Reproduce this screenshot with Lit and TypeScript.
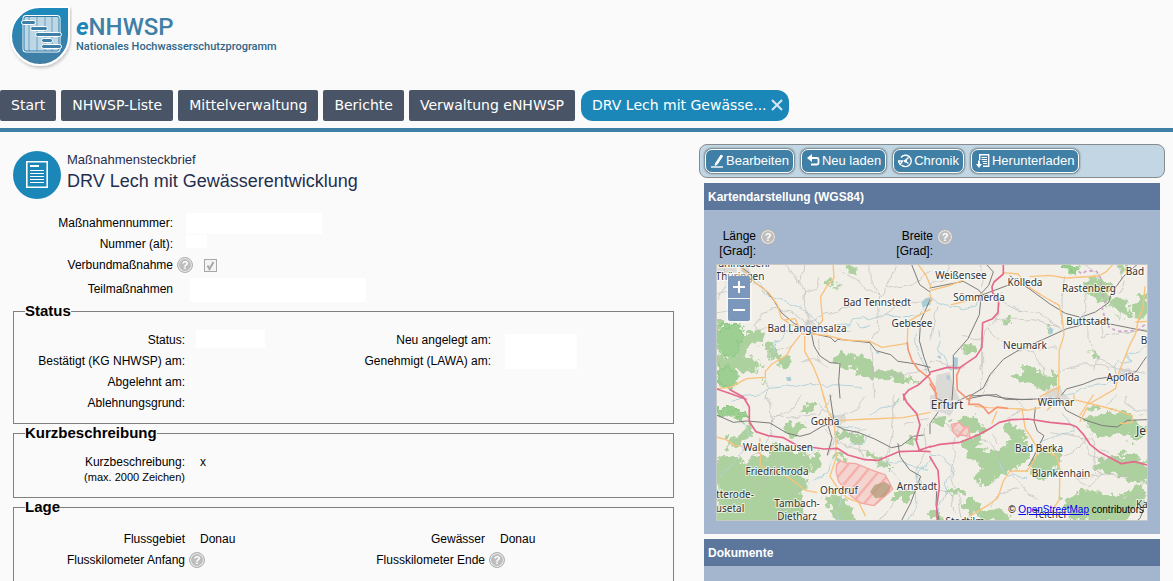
import { LitElement, html, css, svg } from "lit";
import { customElement, property } from "lit/decorators.js";

type Layer = "forest" | "park" | "town" | "river" | "lake" | "minor" | "rail" | "primary" | "trunk" | "motorway" | "border" | "zone";
interface Tile {
  dx: number;
  dy: number;
  layers: Partial<Record<Layer, string>>;
}

const ORDER: Layer[] = ["town", "forest", "park", "river", "lake", "minor", "rail", "primary", "trunk", "motorway", "border", "zone"];

const TILES: Tile[] = [
  {
    dx: 0,
    dy: 0,
    layers: {
      town: "M285 185l18-8 12 14 8 22-22 12-24-8zM92 22l22-4 8 20-20 8zM20 20h60v18h-60z",
      forest:
        "M18 168l8 18 10 8-18 14zM20 205l30-8 20-2 14-5 12 8 6 28 26-10 20-8 14 18 4 14-12 8-24-4-12 8-12 22-22 14-14 8-26-8-14 4zM22 290l40 10 34-16 20 12 30 2 10 20-18 14-14 6-28-8-16 4-6 42-24 10-24-12z M158 255l22-8 14 14-10 10-22-4zM174 276l24-6 14 14-2 16-28-6zM378 292l22-18 20 6 18 10 38 10 14 18 20 14 44 2 30 14 30 2-8 12-40-2-44-6-22 8-12-4-30-14-30-20-26-6-28-4zM412 22l18-8 10 12-6 14-18-2zM346 60l12-6 18 10-10 14-12-6zM200 300l38-8-4 22-16 10-12-12zM92 312l24-6 30 14-10 16-30-4zM590 362l24-4 2 8-20 6zM520 338l30-6 10 12-30 8zM375 82l14-6-4 8zM150 365l10-4 2 10-8 2z",
      park: "M20 205l50-10 26 0 6 34-20 40-14 20-46-2zM28 312l54 30-2 34-20 12-30-14z",
      lake: "M634 126l14-12 14-2v22l-24 8zM228 352l14-2 2 12-12 2zM495 275l14 2-4 6z",
      river:
        "M92 30l20 18 38 26 10 28 50 14 30 16 30 10 40 36 24 24 60-6 28-2 8-20 30-4 18 10 36-12 40-2 30 4 40-2 20-26 12-14M60 418l40-12 50-4 30-16 40-6 36 4 44-14 50 6 20-8 60 4 30 14M622 222l-4 50 18 30 20 36M235 200l-40 50-10 40M440 190l12 14 28-8",
      minor:
        "M330 55l-8 30-38 10-14-34M284 95l-4 40 20 50M136 196l22-36 34-12 52 8 54 34M136 196l14 10 110 8M300 190l40-20 40-20 42-8M480 14v34l22 62 4 90-22 42 6 84v90M386 30l50 26 74 58 18-28 72-12M20 104l40-8 66-22M165 352l14 34-8 34M326 238l4 60 22 30M276 306l54-10M490 332l80 12 90-14M420 205l-100 10M505 180l60-40 95-20M40 14l10 60-26 44M230 14l20 40 24 10M560 14l-30 70M20 160l40-10M240 262l-60 20M600 75l60-40M282 14l-8 44",
      rail:
        "M94 22l30 22 8 22 30 20 30 36 20 34 40 34 52 28 8 40 18 30 30 20 30 2-4 54 4 50M305 220l56 12 14 14 8-8 22 2 75 8 18 24 44 12 22 20 56 8 40 10M605 14l24 60 31 22M660 120l-28 62-4 60 14 50 18 50",
      primary:
        "M92 22l44 46 40 30 26 36 12 40 28 20 24 6 10 22h32l30-42-4-40-2-30 20-34 20-22-4-62M304 222l46 4 54 14 76 4 36 18 76-12 2-66 66-36M270 226l-26 34-14 26-44 26-20 22v18l-56 4-50 26-40 4M284 230v44l26 46 20 50 14 50M625 14l24 34 14 34M225 180l30-4 14 28",
      trunk: "M592 248l2 20 12 34 18 26 28 22M652 350l8 6",
      motorway: "M18 386l40 14 50 18M582 420v-14l14-16 30-16 26-24 8-8",
    },
  },
  {
    dx: 660,
    dy: 0,
    layers: {
      town: "M20 345l40-10 10 40 20 45H10zM350 390l40-12 8 20-20 22h-40zM565 330l34-6 8 20-34 6z",
      forest:
        "M390 14h46l6 16-18 12zM470 62l20-14 26 10 22 20 2 34-14 22-20-16-16-14-22-6zM545 118l34 4 24 18-4 22-18 10-18-20-22-14zM612 130l20-20 18-10v60l-20 18-18-8zM102 262l18-12 20 4 4 12-16 14-22 2zM250 350l24-20 30-8 20 6 14 14 44 4 2 26-22 12-34-4-18-16-26 6-26-10zM225 180l12-4 2 14-10 4zM480 275l18 4 8 12-18 2zM565 20l26-6-4 14-18 6zM355 200l10-4-4 30z",
      park: "M390 14h52l8 6-24 18z",
      lake: "M20 290l10-4 4 12zM50 345l10 2-2 14-8-4zM356 202l14 4-2 14-10 4zM70 290l14 4-2 36-12-2z",
      river:
        "M0 112l24 18 30 10 50 6 40-8 10-32M24 210l4 60 20 40 24 20M400 405l40-10 34-16 60-6 26-22-8-40 16-14 10 10 24-4-8-24 14 2 18-6 22-20M250 138l18 14",
      minor:
        "M150 14l10 30-10 40M220 100l-14 60-40 50-8 40v60l-10 80M190 180l40-8 90 12 70 20M220 128l40 22 70 10 60 45M285 270l40 20 14 40 6 50M380 335l60-16 70-6 28 6M468 180v50l22 24 14 32-6 40M404 55l-8 60 2 80M515 180v54l60-14 72-10M460 14l50 32-40 30-4 60-8 30M588 110l-20 70M60 14L40 60 0 72M170 210l30 22 60 38 120-6M20 140L10 200 0 240M100 230l60 4M560 20l20 40-10 40M500 290l60 36 90 14M0 300l40 12 60 10M190 340l-34 68",
      rail:
        "M170 14l20 22-14 40-22 24-6 64-34 72-44 50v80l-4 54M0 84l40-8 60-12 46 26 14 16M156 105l80-30M240 48l60 40 60 44 46 28 46 12 44-16 40-28 8-28 36-50 50-44M650 214l-90-18-60-12-90 22-70 32-70 30-50 30-40 46-20 40-40 24 80-4 26 14 80 0M395 405l14-18 50-14 40-16 80-12 40-10 20-30 10-14",
      primary:
        "M0 92l60-16 36-14M0 102l6 20-6 4M154 100l-30 20-60 14M220 38l44 4 34 40 50 32 40 22 10 50 4 40-14 44-2 110-4 40-30 30M300 50l60-4 46 8 100-6 24-14 18-20M645 80l-6 60-14 40-8 40-20 40-30 76-10 50-80 46M618 186l34-2M330 410l60-30",
      trunk: "M0 360l14 22 6 38M90 324l-10 22 2 44 34 30M0 372l20 30",
      motorway: "M220 14v28l-28 24-6 14 2 18 18 24-2 36-16 18-30 12-2 44v30l-18 28-30 20-20 14-36-2-50 14",
      border: "M446 34l10 8 14-10 30 2 14 24v34l12 30-2 16M516 140l8 34 14 28 24 12 58-2 28-20",
    },
  },
  {
    dx: 0,
    dy: 405,
    layers: {
      town: "M345 65l60-8 4 24-50 10z",
      forest:
        "M20 40l36-6 40 14 14 16-2 14-20-4-24-10-44-6zM280 24l26-2 10 22-20 16-20-8 2-14zM378 106l50 8 28 10 4 14-20 4-34-12-26-6zM225 100l30-18 28 8-14 14-10 24-22-2zM50 130l44-10 24-38 6 26-16 24-28 20-26 2zM20 196l30-8 40-2 18 30 30-30 10-12 26 20 14-10-14-24 24-22 34 20 26 18 26-6 14 18 14 12-18 16-16 26 14 20-24 36 18 22-12 40-40 50H24zM310 182l16-6 4 20-10 24-20 10-6-22zM376 178l16-10 14 26-14 6zM336 312l40-16 30 22 14 20 14 14-4 34h-44l-20-36zM470 170l30 10 8 14-30-8zM556 18l8-4 2 12-6 2zM590 136l30-14 8 14-24 4zM490 188l40 10 14 20-20-2zM140 360l50-20 70 24v24H140zM550 294l26-14 34 8-16 30-24-6-22 8z",
      park: "M20 40l36-6 40 14 14 18-4 12-40-22-46-4z",
      river:
        "M185 70l-2 50-14 20M330 22l60 70 70 10M380 180l-30 50-60 40M105 80l10 30-20 60-70 80M480 60l30-20 60-16M660 190l-30 40-18 50 4 60-30 50M400 290l-20 60 4 30M515 200l70 6 60 20M420 150l34-4 26-28",
      minor:
        "M165 0l14 24 8 66-10 30M180 60l60 6 80-6M270 0l-18 40-66 30M390 82l-12 60 38 14 80 18M460 0l-20 46-50 24M548 0l4 60-8 70-14 60 20 30M470 100l-60 22-36 20M228 180l-40 52-22 30-30 6-40 30-40 44-30 10M280 250l-24 40-36 36-24 52M510 380l40-60 76-60M155 170l-26 10-20 30M340 90l30 40-18 50M580 90l70-20M420 110l24 40 20 40 60 20 50 50M316 160l-30 40M640 100l10 70-30 60 20 60M20 290l40 20 30 30-10 40M366 0l-40 70",
      rail:
        "M20 60l50 22 40-4 70 6 50 30 40 10 30-8 40-24 34-2 30 14 40 8 50 20 50 26 30-6 36-28 30-4M360 0l14 92M564 146l6 38 28 40 34 20-30 80-28 54M354 90l12 40-14 50",
      primary:
        "M340 0l14 50 18 30 6 60v50l-18 54 20 30 30 34 36 14 20 40M374 94l16-18 90-4 100-4 50-10 30-6M20 126l28 8 26 18 48 2 30 24-2 34 60 20 26 16 20 14 30 24 34 6M150 130l-2 40",
      motorway:
        "M60-16l40 22 18 30v44l20 30 36 12 46 6 46 26 34 2 42 6 40-2 32 20 50 14 42 2 60-26 56-2 38 2M580-2l10 24 30 34 10 34-12 46 10 30 34-12",
      zone: "M380 208l12-10 16 6 30 2 44 18 44 16 12 22 10 20-12 12-44 38-40-8-30-22-36-42-8-30z",
    },
  },
  {
    dx: 660,
    dy: 405,
    layers: {
      town: "M0 0h60l20 30-20 34-20-10L0 44zM360 0l40-6 24 20-40 10z",
      forest:
        "M86 78l30-16 26 12 14 20 12 12-12 12-40-10zM98 142l34-18 22 12-12 24 6 24-20 8-22-22zM126 184l24-22 30 8 34-12 40-30 36 14 12 30-16 30-36 24-34 6-22 22-6 14-24 10-28-36 24-16zM220 94l28-6 22 12 22 26-14 10-38-10zM294 216l30-42 28-18 26 14 16 14-6 30-26 24-30 14-38-8zM466 74l60-24 50-2 30 20 26 12 18 30-24 30-40-20-50 6-40-8-20-20zM500 200l40-14 36 8 44-4 32 16v50l-46 6-36-24-40-8-34-10zM395 316l56-26 50-4 40 22 50-10 26-24 26-4v48l-30 30-26 30H420l-10-34zM96 326l24-20 22 20 12 20-30 8zM50 290l40-20 10 16-30 12zM6 86l26-30 26 16-18 16zM146 350l50-12 36 20-6 22H140zM566 178l50-2 20 14-30 8zM0 340l30 10 10 30H0zM470 40l30-10 10 8-26 10z",
      river:
        "M0 180l30 4 44 28-4 20-18 20-8 40-20 60M395 62l30 28 10 20-50 8-30 16-24 10M560 0l-30 30M210 200l20 40 60 8M650 300l-30 40",
      minor:
        "M20 60l34 30 60 40 54 6 24 24 20 40 34 30 10 20 44 50 30 10M84 100l-14 60-4 90 20 60 10 60M184 118l20 34M250 14l40 30-60 24M366 110l70 14 54 10 8 40-10 50 30 12-40 40-50-30M440 250l80-12 60 8 70 20M300 130l26 30M450 120l30 60 60 20M590 0l-6 30 66 20M540 60l-60 60M180 340l20-40 60-24M390 190l40-20 40-40M510 160l60 38M0 280l60 14 20 60M540 330l50-24 60-8",
      rail:
        "M0 116l0-30 24-34M110 12l60-12 44 8 60 6 44-2 70-2 20 36 60 30 50 16 44 4 30-20 58-2M316 38l-4 40 10 30 20 14-20 40-14 30-12 20M20 290l-2 40 10 50M650 320l-20 50-12 10M20 10l40 20 60-30",
      primary:
        "M136 34l40 4 100 4 14 4 40-8M276 42l10 60 14 20 16 28 10 18-20 40-16 20-50 0-20 30-16 50-26 20-60 36M330 158l50 26 10 40-2 90-16 24M432 14l90 22 50 14 34 12v20l-36 4M470 40l-20 40M490 0l-40 60M200 50l-14 34M432 0v14",
      trunk: "M116 28h30l14 8 16 20 26-20 30 4M116 28l6-28",
      motorway: "M0 156l30-8 60-6 54-22 40-22 24-16 36-8 50-2 66 10 60 6 20 8 20 22 20 30 30 24 64 34 40-6 36 10M0 186l24 40 4 50-8 60 2 46",
      zone: "M64 88l26-6 10 12 14 2 6 28-28-4-8 6-14-14z",
    },
  },
];

/* name, x, baseline, size class */
const PLACES: [string, number, number, string?][] = [
  ["Mühlhausen/", 24, 3],
  ["Thüringen", 24, 16],
  ["Bad Langensalza", 91, 68],
  ["Bad Tennstedt", 161, 42],
  ["Gebesee", 196, 63],
  ["Weißensee", 245, 15],
  ["Sömmerda", 263, 37],
  ["Kölleda", 309, 22],
  ["Rastenberg", 373, 28],
  ["Bad", 419, 11],
  ["Buttstadt", 372, 61],
  ["Neumark", 309, 85],
  ["B", 428, 80],
  ["Apolda", 407, 117],
  ["Erfurt", 231, 145, "city"],
  ["Weimar", 340, 142],
  ["Jena", 432, 171, "city"],
  ["Bad Berka", 323, 188],
  ["Blankenhain", 345, 213],
  ["Arnstadt", 201, 226],
  ["Gotha", 109, 161],
  ["Waltershausen", 62, 187],
  ["Friedrichroda", 61, 211],
  ["Ohrdruf", 123, 230],
  ["Tambach-", 81, 243],
  ["Dietharz", 81, 256],
  ["tterode-", 19, 234],
  ["usetal", 14, 248],
  ["Stadtilm", 249, 261],
  ["Teichel", 334, 254],
  ["Ka", 426, 244],
];

@customElement("help-hint")
class HelpHint extends LitElement {
  @property() topic = "";
  static styles = css`
    :host { display: inline-flex; flex: none; }
    .hint {
      width: 16px; height: 16px; padding: 0; border: 1px solid #b2b2b2; border-radius: 50%;
      background: #bdbdbd; box-shadow: inset 0 0 0 1px #eee;
      color: #fff; font: bold 11px/14px "Liberation Sans", Arial, sans-serif; text-align: center;
    }
  `;
  render() {
    return html`<button class="hint" type="button" aria-label="Hilfe: ${this.topic}">?</button>`;
  }
}

@customElement("region-map")
class RegionMap extends LitElement {
  static styles = css`
    :host { display: block; position: relative; font-family: "Liberation Sans", Arial, sans-serif; }
    .map { display: block; width: 100%; height: auto; background: #f2efe9; }
    .layer { fill: none; stroke-linejoin: round; stroke-linecap: round; }
    .town { fill: #dcdad6; }
    .forest { fill: #add19e; stroke: #add19e; stroke-width: 3; filter: url(#ragged); }
    .park { fill: #8fce88; fill-opacity: 0.5; stroke: #7fc67a; stroke-width: 4; stroke-opacity: 0.7; filter: url(#ragged); }
    .lake { fill: #a9cdd6; }
    .river { stroke: #b4d3da; stroke-width: 3; filter: url(#winding); }
    .minor { stroke: #bdbcba; stroke-width: 2; filter: url(#winding); }
    .rail { stroke: #7a7a78; stroke-width: 3; }
    .primary { stroke: #f9c27c; stroke-width: 4; }
    .trunk { stroke: #f79576; stroke-width: 5; }
    .motorway { stroke: #e5698b; stroke-width: 5; }
    .border { stroke: #cfa3cf; stroke-width: 5; stroke-dasharray: 10 9; stroke-linecap: butt; }
    .zone { fill: url(#hatch); stroke: #f4a8a4; stroke-width: 4; }
    .place {
      font: 10px "Noto Sans", sans-serif; fill: #333; text-anchor: middle;
      stroke: #fff; stroke-opacity: 0.7; stroke-width: 2px; paint-order: stroke;
    }
    .city { font-size: 12px; }
    .zoom {
      position: absolute; left: 10px; top: 10px; padding: 2px; display: grid; gap: 1px;
      background: rgba(255, 255, 255, 0.4); border-radius: 4px;
    }
    .step {
      width: 22px; height: 22px; padding: 0; border: 0; color: #fff; background: #7b98bc;
      display: grid; place-items: center;
    }
    .step:first-child { border-radius: 2px 2px 0 0; }
    .step:last-child { border-radius: 0 0 2px 2px; }
    .credit { position: absolute; right: 4px; bottom: 5px; font-size: 10px; line-height: 13px; color: #000; white-space: nowrap; }
    .credit a { color: #0000ee; }
  `;
  render() {
    return html`
      <svg class="map" viewBox="0 0 432 257" role="img" aria-label="Karte der Region Erfurt">
        <defs>
          <pattern id="hatch" width="28" height="28" patternUnits="userSpaceOnUse" patternTransform="rotate(40)">
            <rect width="28" height="28" fill="#f7b5b0" fill-opacity="0.45"></rect>
            <rect width="7" height="28" fill="#f49a95" fill-opacity="0.65"></rect>
          </pattern>
          <filter id="ragged" x="-5%" y="-5%" width="110%" height="110%">
            <feTurbulence type="fractalNoise" baseFrequency="0.045" numOctaves="3" seed="4"></feTurbulence>
            <feDisplacementMap in="SourceGraphic" scale="46" xChannelSelector="R" yChannelSelector="G"></feDisplacementMap>
          </filter>
          <filter id="winding" x="-5%" y="-5%" width="110%" height="110%">
            <feTurbulence type="fractalNoise" baseFrequency="0.025" numOctaves="2" seed="9"></feTurbulence>
            <feDisplacementMap in="SourceGraphic" scale="24" xChannelSelector="R" yChannelSelector="G"></feDisplacementMap>
          </filter>
        </defs>
        <g transform="translate(-6 -4) scale(0.33333)">
          ${ORDER.map((l) =>
            TILES.map((t) => (t.layers[l] ? svg`<path class="layer ${l}" transform="translate(${t.dx} ${t.dy})" d=${t.layers[l]}></path>` : "")),
          )}
          <path fill="#b39b77" fill-opacity=".75" d="M480 695l14-20 30-10 18 12-4 16-16 18-26 4z"></path>
        </g>
        ${PLACES.map(([n, x, y, c]) => svg`<text class="place ${c ?? ""}" x=${x} y=${y}>${n}</text>`)}
        <rect x=".5" y=".5" width="431" height="256" fill="none" stroke="#c8c8c8"></rect>
      </svg>
      <div class="zoom">
        <button class="step" type="button" aria-label="Vergrößern">
          <svg width="12" height="12" viewBox="0 0 12 12"><path d="M6 0v12M0 6h12" stroke="#fff" stroke-width="2"></path></svg>
        </button>
        <button class="step" type="button" aria-label="Verkleinern">
          <svg width="12" height="12" viewBox="0 0 12 12"><path d="M0 6h12" stroke="#fff" stroke-width="2"></path></svg>
        </button>
      </div>
      <div class="credit">© <a href="#osm">OpenStreetMap</a> contributors</div>
    `;
  }
}

const ICONS = {
  edit: svg`<path d="M5.500 10.500L11 2l1.600 1L7 11.500l-2 .8z" fill="#fff" stroke="#fff"></path><path d="M1 14h12" stroke="#fff" stroke-width="1.400"></path>`,
  reload: svg`<path d="M2.500 5H11q1.500 0 1.500 1.500v3.500q0 1.500-1.500 1.500H5" fill="none" stroke="#fff" stroke-width="1.800"></path><path d="M6 1L1 5l5 4z" fill="#fff"></path>`,
  history: svg`<path d="M3 4.500A5.700 5.700 0 1 1 3.500 12" fill="none" stroke="#fff" stroke-width="1.400"></path><path d="M0 8h4.600L2.200 11.500zM10.500 4.500L7 8l3.500 2.500" fill="none" stroke="#fff" stroke-width="1.400"></path><circle cx="7.500" cy="8" r="1.500" fill="#fff"></circle>`,
  download: svg`<path d="M3.700 7V1.700h9v11.600H7" fill="none" stroke="#fff" stroke-width="1.400"></path><path d="M5.500 4.500h5.500M5.500 6.500h5.500M6.500 8.500H11M7 10.500h4" stroke="#fff"></path><path d="M3 7.500v5" stroke="#fff" stroke-width="2"></path><path d="M0 11h6l-3 4z" fill="#fff"></path>`,
};

@customElement("app-root")
class AppRoot extends LitElement {
  static styles = css`
    :host {
      display: block; height: 100vh; overflow: hidden; background: #fafafa; color: #000;
      font: 12px/15px "Liberation Sans", Arial, sans-serif;
    }
    * { box-sizing: border-box; }
    .brand { display: flex; gap: 4px; height: 90px; padding: 5px 8px; }
    .mark { flex: none; }
    .wordmark { padding-top: 10px; font-family: Roboto, sans-serif; font-weight: 500; color: #407fa6; }
    .name { font-size: 24px; line-height: 24px; }
    .name em { color: #1b87b8; font-weight: 700; }
    .claim { font-size: 11px; line-height: 16px; color: #2f6688; }
    .tabs { display: flex; gap: 5px; height: 42px; padding-bottom: 7px; border-bottom: 4px solid #407fa6; }
    .tab {
      display: flex; align-items: center; gap: 4px; padding: 0 11px 1px; border-radius: 2px; white-space: nowrap;
      background: #495567; color: #fff; font: 14px/30px "DejaVu Sans", Verdana, sans-serif; text-decoration: none;
    }
    .current { margin-left: 1px; padding-right: 6px; border-radius: 12px; background: #1b87b8; }
    .current a { color: inherit; text-decoration: none; }
    .close { display: grid; padding: 0; border: 0; background: none; }
    .main { display: grid; grid-template-columns: minmax(0, 661fr) minmax(0, 466fr); gap: 25px; padding: 12px 8px 0 13px; }
    .head { display: flex; gap: 6px; margin: 7px 0 14px; color: #1f2f4f; }
    .kicker { margin: 0; font-size: 13px; line-height: 17px; }
    .title { margin: 0; font-size: 18px; line-height: 26px; font-weight: 400; }
    .row { display: flex; min-height: 21px; padding: 3px 0; }
    .tall { min-height: 27px; align-items: center; }
    .label { flex: none; width: 171px; text-align: right; }
    .basics .label { width: 160px; }
    .value { margin-left: 15px; }
    .blank { display: block; margin: -3px 0 -3px 13px; background: #fff; }
    .b-number { width: 136px; height: 21px; }
    .b-old { width: 21px; height: 13px; margin-top: -2px; }
    .b-parts { width: 176px; height: 24px; margin-left: 17px; }
    .b-state { width: 69px; height: 18px; margin-left: 11px; }
    .b-dates { width: 72px; height: 35px; margin: 4px 0 0 14px; }
    .row help-hint { margin: -1px 0 -1px 4px; height: 16px; }
    .tick { position: relative; margin: 1px 0 0 11px; height: 13px; }
    .tick input { appearance: none; display: block; margin: 0; width: 13px; height: 13px; border: 1px solid #a8a8a8; background: #f4f4f4; }
    .tick svg { position: absolute; inset: 0; }
    .group { margin: 0 0 1px; padding: 11px 0 9px; border: 1px solid #808080; min-width: 0; }
    .group legend { margin-left: 11px; padding: 0; font-size: 15px; line-height: 16px; font-weight: 700; }
    .cols { display: grid; grid-template-columns: 306fr 353fr; }
    .place { padding-top: 14px; min-height: 160px; }
    .place .cols { grid-template-columns: 300fr 359fr; }
    .pair { display: flex; }
    .note { font-size: 11px; }
    .tools {
      display: flex; align-items: center; gap: 7px; height: 34px; padding: 0 5px; margin-bottom: 5px;
      border: 1px solid #858b8f; border-radius: 8px; background: #c2d7e3;
    }
    .tool {
      display: flex; align-items: center; gap: 2px; height: 24px; padding: 0 4px; border: 1px solid #fff; border-radius: 7px;
      background: #407fa6; color: #fff; box-shadow: 0 0 2px 1px #6d7d86; white-space: nowrap;
      font: 13px/16px "Liberation Sans", Arial, sans-serif;
    }
    .tool svg { flex: none; }
    .panel { margin: 0 5px 5px; background: #a4b6cd; }
    .panel h2 { margin: 0; padding: 7px 4px 5px; font-size: 12px; line-height: 15px; color: #fff; background: #5d779c; }
    .body { padding: 19px 12px 13px; }
    .coords { display: grid; grid-template-columns: 177fr 255fr; margin-bottom: 5px; }
    .coord { display: flex; gap: 4px; }
    .coord span { width: 40px; text-align: right; }
    .docs { min-height: 80px; }
  `;

  private tool(icon: keyof typeof ICONS, text: string) {
    return html`<button class="tool" type="button">
      <svg width="14" height="16" viewBox="0 0 14 16" aria-hidden="true">${ICONS[icon]}</svg>${text}
    </button>`;
  }

  private row(label: unknown, value: unknown = "") {
    return html`<div class="row"><span class="label">${label}</span>${value}</div>`;
  }

  render() {
    return html`
      <header class="brand">
        <svg class="mark" width="64" height="66" viewBox="0 0 64 66" aria-hidden="true">
          <defs>
            <linearGradient id="drop" x1="0" y1="0" x2="0" y2="1"><stop offset="0" stop-color="#1b8abc"></stop><stop offset="1" stop-color="#447da3"></stop></linearGradient>
            <filter id="soft" x="-20%" y="-20%" width="150%" height="150%"><feDropShadow dx="1" dy="2" stdDeviation="1.500" flood-opacity=".22"></feDropShadow></filter>
          </defs>
          <path d="M61 2v29A29 29 0 1 1 32 2z" fill="url(#drop)" stroke="#fff" stroke-width="2" filter="url(#soft)"></path>
          <rect x="15" y="10.500" width="37" height="36.500" rx="2.500" fill="#bed7e4" stroke="#fff"></rect>
          <path d="M21 12v34M29 12v34M37 12v34M44 12v34" stroke="#6ba0c0"></path>
          <rect x="16" y="11.500" width="35" height="34.500" rx="2" fill="none" stroke="#2f7ba6"></rect>
          <g fill="#3d7fa6" stroke="#fff" stroke-width="1">
            <rect x="13.500" y="15.500" width="14" height="4" rx="2"></rect><rect x="22.500" y="21.500" width="17" height="4" rx="2"></rect>
            <rect x="27.500" y="27.500" width="26" height="4" rx="2"></rect><rect x="33.500" y="33.500" width="11" height="4" rx="2"></rect>
            <rect x="33.500" y="39.500" width="20" height="4" rx="2"></rect>
          </g>
        </svg>
        <div class="wordmark">
          <div class="name"><em>e</em>NHWSP</div>
          <div class="claim">Nationales Hochwasserschutzprogramm</div>
        </div>
      </header>
      <nav class="tabs">
        ${["Start", "NHWSP-Liste", "Mittelverwaltung", "Berichte", "Verwaltung eNHWSP"].map((t) => html`<a class="tab" href="#">${t}</a>`)}
        <div class="tab current">
          <a href="#" aria-current="page">DRV Lech mit Gewässe...</a>
          <button class="close" type="button" aria-label="Schließen">
            <svg width="12" height="12" viewBox="0 0 12 12"><path d="M1 1l10 10M11 1L1 11" stroke="#d5e8f2" stroke-width="2"></path></svg>
          </button>
        </div>
      </nav>
      <main class="main">
        <section>
          <div class="head">
            <svg width="48" height="48" viewBox="0 0 48 48" aria-hidden="true">
              <circle cx="24" cy="24" r="24" fill="#1b87b8"></circle>
              <path d="M13.800 10.800h20.400v25.400H13.800z" fill="none" stroke="#fff" stroke-width="1.600"></path>
              <path d="M17 15h9" stroke="#fff" stroke-width="2"></path>
              <path d="M17 19.500h14M17 22.500h14M17 25.500h14M17 28.500h14M17 31.500h14" stroke="#fff"></path>
            </svg>
            <div>
              <p class="kicker">Maßnahmensteckbrief</p>
              <h1 class="title">DRV Lech mit Gewässerentwicklung</h1>
            </div>
          </div>
          <div class="basics">
            ${this.row("Maßnahmennummer:", html`<span class="blank b-number"></span>`)}
            ${this.row("Nummer (alt):", html`<span class="blank b-old"></span>`)}
            <div class="row">
              <label class="label" for="group-measure">Verbundmaßnahme</label>
              <help-hint topic="Verbundmaßnahme"></help-hint>
              <span class="tick">
                <input id="group-measure" type="checkbox" checked disabled />
                <svg width="13" height="13" viewBox="0 0 13 13" aria-hidden="true"><path d="M3.500 6.500l2 3.500 4-7" fill="none" stroke="#a8a8a8" stroke-width="2"></path></svg>
              </span>
            </div>
            <div class="row tall"><span class="label">Teilmaßnahmen</span><span class="blank b-parts"></span></div>
          </div>
          <fieldset class="group">
            <legend>Status</legend>
            <div class="cols">
              <div>
                ${this.row("Status:", html`<span class="blank b-state"></span>`)}
                ${this.row("Bestätigt (KG NHWSP) am:")} ${this.row("Abgelehnt am:")} ${this.row("Ablehnungsgrund:")}
              </div>
              <div class="pair">
                <div>${this.row("Neu angelegt am:")} ${this.row("Genehmigt (LAWA) am:")}</div>
                <span class="blank b-dates"></span>
              </div>
            </div>
          </fieldset>
          <fieldset class="group">
            <legend>Kurzbeschreibung</legend>
            ${this.row(html`Kurzbeschreibung:<br /><span class="note">(max. 2000 Zeichen)</span>`, html`<span class="value">x</span>`)}
          </fieldset>
          <fieldset class="group place">
            <legend>Lage</legend>
            <div class="cols">
              <div>
                ${this.row("Flussgebiet", html`<span class="value">Donau</span>`)}
                ${this.row("Flusskilometer Anfang", html`<help-hint topic="Flusskilometer Anfang"></help-hint>`)}
              </div>
              <div>
                ${this.row("Gewässer", html`<span class="value">Donau</span>`)}
                ${this.row("Flusskilometer Ende", html`<help-hint topic="Flusskilometer Ende"></help-hint>`)}
              </div>
            </div>
          </fieldset>
        </section>
        <aside>
          <div class="tools">
            ${this.tool("edit", "Bearbeiten")} ${this.tool("reload", "Neu laden")} ${this.tool("history", "Chronik")} ${this.tool("download", "Herunterladen")}
          </div>
          <section class="panel">
            <h2>Kartendarstellung (WGS84)</h2>
            <div class="body">
              <div class="coords">
                <div class="coord"><span>Länge [Grad]:</span><help-hint topic="Länge"></help-hint></div>
                <div class="coord"><span>Breite [Grad]:</span><help-hint topic="Breite"></help-hint></div>
              </div>
              <region-map></region-map>
            </div>
          </section>
          <section class="panel docs"><h2>Dokumente</h2></section>
        </aside>
      </main>
    `;
  }
}
